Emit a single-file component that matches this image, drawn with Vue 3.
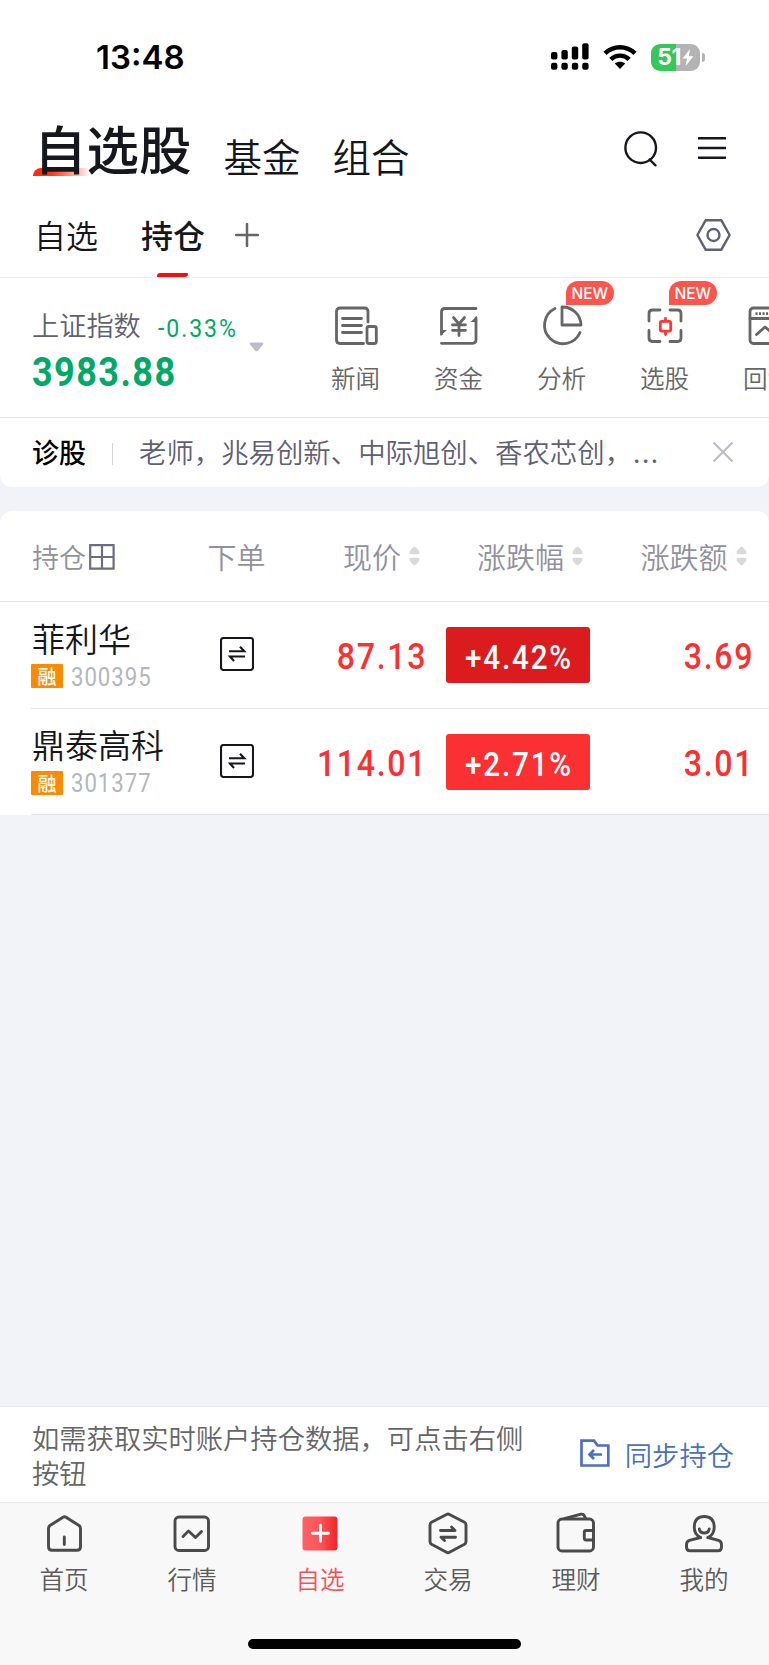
<template>
  <div class="page">
    <div class="status-bar">
      <span class="time">13:48</span>
      <div class="status-icons">
        <svg class="signal" width="38" height="28" viewBox="0 0 38 28">
          <rect x="0" y="9" width="6.4" height="7.5" rx="2" />
          <rect x="10.4" y="7" width="6.4" height="9.5" rx="2" />
          <rect x="20.8" y="3.5" width="6.4" height="13" rx="2" />
          <rect x="31.2" y="0.3" width="6.4" height="16.2" rx="2" />
          <rect
            v-for="n in 4"
            :key="n"
            :x="(n - 1) * 10.4"
            y="19.8"
            width="6.4"
            height="7"
            rx="2.2"
          />
        </svg>
        <svg class="wifi" width="34" height="26" viewBox="0 0 34 26">
          <g fill="none" stroke="#000" stroke-width="4.4">
            <path d="M2 9.4C10.5 1.2 23.5 1.2 32 9.4" />
            <path d="M7.8 15.4C13 10.4 21 10.4 26.2 15.4" />
          </g>
          <path d="M17 25L11.8 19.6C14.6 17 19.4 17 22.2 19.6Z" />
        </svg>
        <div class="battery">
          <span class="battery-num">51</span>
          <svg width="12" height="17" viewBox="0 0 12 17">
            <path d="M8 0L0.5 9.4H5L3.6 17L11.5 7.2H6.8Z" fill="#fff" />
          </svg>
        </div>
        <span class="battery-cap"></span>
      </div>
    </div>

    <header class="header">
      <div class="main-tab active"><span>自选股</span></div>
      <div class="main-tab">基金</div>
      <div class="main-tab">组合</div>
      <div class="header-icons">
        <svg width="34" height="38" viewBox="0 0 34 38" class="line-icon">
          <circle cx="16.7" cy="18.7" r="15.3" />
          <path d="M25.5 30.5L31.5 36.3" />
        </svg>
        <svg width="28" height="24" viewBox="0 0 28 24" class="line-icon">
          <path d="M0.5 2.3H27.5M0.5 12H27.5M0.5 21.7H27.5" />
        </svg>
      </div>
    </header>

    <nav class="sub-tabs">
      <span class="sub-tab">自选</span>
      <span class="sub-tab current">持仓</span>
      <svg class="add" width="24" height="24" viewBox="0 0 24 24">
        <path d="M1 12H23M12 1V23" />
      </svg>
      <svg class="setting" width="35" height="32" viewBox="0 0 35 32">
        <path d="M9.6 1.3H25.4L33.6 16L25.4 30.7H9.6L1.4 16Z" />
        <circle cx="17.5" cy="16" r="6" />
      </svg>
    </nav>

    <section class="index-row">
      <div class="index">
        <div class="index-top">
          <span class="index-name">上证指数</span>
          <span class="index-rate num">-0.33%</span>
        </div>
        <div class="index-value num">3983.88</div>
      </div>
      <svg class="arrow" width="15" height="10" viewBox="0 0 15 10">
        <path d="M2 0.5H13Q15 0.5 14 2.6L9 8.6Q7.5 10 6 8.6L1 2.6Q0 0.5 2 0.5Z" />
      </svg>
      <div class="entries">
        <div v-for="entry in entries" :key="entry.name" class="entry">
          <svg width="44" height="42" viewBox="0 0 44 42" class="entry-icon">
            <template v-if="entry.icon === 'news'">
              <path d="M34 17V6.5Q34 3 30.5 3H6Q2.5 3 2.5 6.5V35Q2.5 38.5 6 38.5H29.5" />
              <path d="M8.5 13.5H27.5M8.5 20.5H27.5M8.5 27.5H27.5" />
              <rect x="33" y="21.5" width="9.3" height="17" rx="2" />
            </template>
            <template v-else-if="entry.icon === 'money'">
              <path d="M39 3.5H8Q4.5 3.5 4.5 7V29" />
              <path d="M4.5 38.3H35.5Q39 38.3 39 34.8V13" />
              <path class="solid" d="M3.5 25H10L3.5 31ZM40 17H33.5L40 11Z" />
              <path d="M16.5 12.5L22 19L27.5 12.5M22 19V30.5M15.5 19.8H28.5M15.5 25.3H28.5" />
            </template>
            <template v-else-if="entry.icon === 'pie'">
              <path d="M15 3.5A18.5 18.5 0 1 0 40 27.5" />
              <path d="M22 2V20H41A18.5 18.5 0 0 0 22 2Z" />
            </template>
            <template v-else-if="entry.icon === 'pick'">
              <path d="M17 5H9.5Q6 5 6 8.5V16M27 5H34.5Q38 5 38 8.5V16M17 36.5H9.5Q6 36.5 6 33V25.5M27 36.5H34.5Q38 36.5 38 33V25.5" />
              <path class="red" d="M22.5 13.5V16M22.5 26.5V29.5" />
              <rect class="red" x="17.3" y="16.3" width="10.4" height="9.8" rx="1.5" />
            </template>
            <template v-else>
              <rect x="4" y="3" width="36" height="35.5" rx="3.5" />
              <path d="M4 13.5H40" />
              <path class="dots" d="M9.5 8.6H27" />
              <path d="M10.5 29.5L19 22L26 28L33 21" />
            </template>
          </svg>
          <span class="entry-name">{{ entry.name }}</span>
          <span v-if="entry.isNew" class="new">NEW</span>
        </div>
      </div>
    </section>

    <section class="notice">
      <span class="notice-title">诊股</span>
      <span class="notice-line"></span>
      <span class="notice-text">老师，兆易创新、中际旭创、香农芯创，<i>...</i></span>
      <svg class="close" width="22" height="22" viewBox="0 0 22 22">
        <path d="M1.5 1.5L20.5 20.5M20.5 1.5L1.5 20.5" />
      </svg>
    </section>

    <section class="table">
      <div class="row table-head">
        <div class="col-name head-name">
          <span>持仓</span>
          <svg width="26" height="26" viewBox="0 0 26 26">
            <path d="M1.2 1.2H24.6V24.6H1.2ZM13 1.2V24.6M1.2 13H24.6" />
          </svg>
        </div>
        <div class="col-order">下单</div>
        <div v-for="col in columns" :key="col.key" class="head-sort" :class="col.key">
          {{ col.label }}
          <svg width="11" height="20" viewBox="0 0 11 20">
            <path d="M5.5 0.5Q6.2 0.5 7 1.5L10.2 5Q11 8.3 9 8.3H2Q0 8.3 0.8 5L4 1.5Q4.8 0.5 5.5 0.5Z" />
            <path d="M5.5 19.5Q6.2 19.5 7 18.5L10.2 15Q11 11.7 9 11.7H2Q0 11.7 0.8 15L4 18.5Q4.8 19.5 5.5 19.5Z" />
          </svg>
        </div>
      </div>
      <div v-for="stock in stocks" :key="stock.code" class="row stock">
        <div class="col-name">
          <div class="stock-name">{{ stock.name }}</div>
          <div class="stock-sub">
            <span class="tag">融</span>
            <span class="code num">{{ stock.code }}</span>
          </div>
        </div>
        <div class="col-order">
          <svg width="34" height="34" viewBox="0 0 34 34" class="order-icon">
            <rect x="1" y="1" width="32" height="32" rx="2.5" />
            <path d="M9 14.3H24.3L20 9.8M25 19.5H10L14 24" />
          </svg>
        </div>
        <div class="price num">{{ stock.price }}</div>
        <div class="rate">
          <div class="rate-box" :class="{ deep: stock.deep }">
            <span class="num">{{ stock.rate }}</span>
          </div>
        </div>
        <div class="diff num">{{ stock.diff }}</div>
      </div>
    </section>

    <div class="blank"></div>

    <section class="sync">
      <p class="sync-text">如需获取实时账户持仓数据，可点击右侧按钮</p>
      <div class="sync-btn">
        <svg width="30" height="29" viewBox="0 0 30 29">
          <path d="M1.5 1.7H14L17.5 6.5H28.3V26.5H1.5Z" />
          <path d="M22 15.5H9.5M14 11L9.5 15.5L14 20" />
        </svg>
        <span>同步持仓</span>
      </div>
    </section>

    <footer class="tab-bar">
      <div
        v-for="tab in tabs"
        :key="tab.name"
        class="tab"
        :class="{ selected: tab.icon === 'self' }"
      >
        <svg width="42" height="44" viewBox="0 0 42 44" class="tab-icon">
          <template v-if="tab.icon === 'home'">
            <path d="M20 5.2Q21.5 4.2 23 5.2L36 13.5Q37.5 14.6 37.5 16.5V34.5Q37.5 38.3 34 38.3H9Q5.5 38.3 5.5 34.5V16.5Q5.5 14.6 7 13.5Z" />
            <path d="M21.3 25V32.5" />
          </template>
          <template v-else-if="tab.icon === 'market'">
            <rect x="4" y="5" width="33.5" height="33.5" rx="4" />
            <path d="M12 24.5L17.5 19L24.5 25.5L30.5 19.5" />
          </template>
          <template v-else-if="tab.icon === 'self'">
            <defs>
              <linearGradient id="selfFill">
                <stop offset="0" stop-color="#fd6265" />
                <stop offset="0.5" stop-color="#fb5558" />
                <stop offset="1" stop-color="#ef2426" />
              </linearGradient>
            </defs>
            <rect x="3.5" y="4.5" width="35" height="34" rx="3" fill="url(#selfFill)" stroke="none" />
            <path stroke="#fff" d="M13.5 21.3H29.5M21.5 13.3V29.3" />
          </template>
          <template v-else-if="tab.icon === 'trade'">
            <path d="M19.5 2.5Q21 1.6 22.5 2.5L37.5 10.3Q39 11.2 39 13V29.5Q39 31.3 37.5 32.2L22.5 40.3Q21 41.2 19.5 40.3L4.5 32.2Q3 31.3 3 29.5V13Q3 11.2 4.5 10.3Z" />
            <path d="M13.5 18.5H28L24.5 15M28.5 25.3H14L17.5 28.5" />
          </template>
          <template v-else-if="tab.icon === 'finance'">
            <rect x="3" y="7" width="35.5" height="32" rx="4" />
            <path d="M10 6.5L26 2.2Q29 1.5 30.5 6.5M38 18.5H31Q29.3 18.5 29.3 20.5V26Q29.3 28 31 28H38" />
          </template>
          <template v-else>
            <path d="M17.5 25.5Q11.3 22.5 11.3 15.5V14.5Q11.8 4.5 21.2 4.5Q30.7 4.5 31.2 14.5V15.5Q31.2 22.5 25 25.5" />
            <path d="M17.5 25.5L6.5 28.3Q3.5 29.3 3.5 32.5V35Q3.5 38.8 7 38.8H35Q38.5 38.8 38.5 35V32.5Q38.5 29.3 35.5 28.3L25 25.5" />
            <path d="M16.3 17Q17 21 21.2 21Q25.5 21 26.2 17" />
          </template>
        </svg>
        <span class="tab-name">{{ tab.name }}</span>
      </div>
      <div class="home-bar"></div>
    </footer>
  </div>
</template>

<script setup>
import { ref } from "vue";

const entries = ref([
  { name: "新闻", icon: "news" },
  { name: "资金", icon: "money" },
  { name: "分析", icon: "pie", isNew: true },
  { name: "选股", icon: "pick", isNew: true },
  { name: "回测", icon: "test" },
]);

const columns = [
  { key: "price", label: "现价" },
  { key: "rate", label: "涨跌幅" },
  { key: "diff", label: "涨跌额" },
];

const stocks = ref([
  { name: "菲利华", code: "300395", price: "87.13", rate: "+4.42%", diff: "3.69", deep: true },
  { name: "鼎泰高科", code: "301377", price: "114.01", rate: "+2.71%", diff: "3.01", deep: false },
]);

const tabs = [
  { name: "首页", icon: "home" },
  { name: "行情", icon: "market" },
  { name: "自选", icon: "self" },
  { name: "交易", icon: "trade" },
  { name: "理财", icon: "finance" },
  { name: "我的", icon: "mine" },
];
</script>

<style>
body {
  margin: 0;
  background: #f2f3f9;
}
</style>

<style scoped>
.page {
  width: 769px;
  height: 1665px;
  display: flex;
  flex-direction: column;
  overflow: hidden;
  background: #f2f3f9;
  color: #16171d;
  font-family: "Noto Sans CJK SC", sans-serif;
  font-weight: 350;
  white-space: nowrap;
}
.page > * {
  box-sizing: border-box;
  flex-shrink: 0;
}
svg {
  display: block;
  flex-shrink: 0;
}
/* 窄体数字 */
.num {
  display: inline-block;
  font-family: Roboto, sans-serif;
  transform: scaleX(0.87);
  transform-origin: left center;
}

/* 状态栏 */
.status-bar {
  height: 110px;
  padding: 4px 64px 0 96px;
  display: flex;
  align-items: center;
  justify-content: space-between;
  background: #fff;
}
.time {
  font: 600 33px/40px Inter, sans-serif;
  color: #000;
}
.status-icons {
  display: flex;
  align-items: center;
}
.wifi {
  margin-left: 14px;
}
.battery {
  width: 49px;
  height: 27px;
  margin-left: 14px;
  border-radius: 9px;
  background: linear-gradient(90deg, #34c759 51%, #b3b3b3 51%);
  display: flex;
  align-items: center;
  justify-content: center;
}
.battery-num {
  margin-right: 1px;
  font: 700 23px/27px Inter, sans-serif;
  letter-spacing: -0.5px;
  color: #fff;
}
.battery-cap {
  width: 3px;
  height: 9px;
  margin-left: 2px;
  border-radius: 0 3px 3px 0;
  background: #b3b3b3;
}

/* 顶部 */
.header {
  height: 80px;
  padding: 0 43px 0 34px;
  display: flex;
  background: #fff;
}
.main-tab {
  margin-right: 32px;
  font-size: 38.5px;
  line-height: 91px;
}
.main-tab.active {
  position: relative;
  margin-right: 32px;
  font-size: 52.5px;
  line-height: 74px;
  font-weight: 500;
}
.main-tab.active::before {
  content: "";
  position: absolute;
  left: -1px;
  top: 58px;
  width: 55px;
  height: 8px;
  border-radius: 8px 0 0 0;
  background: linear-gradient(90deg, #fb2a08, #fb3a18 35%, rgba(255, 90, 50, 0.1));
}
.main-tab.active span {
  position: relative;
}
.header-icons {
  flex: 1;
  display: flex;
  justify-content: flex-end;
  align-items: center;
  gap: 40px;
  height: 76px;
}
.line-icon {
  fill: none;
  stroke: #16171d;
  stroke-width: 2.4;
  stroke-linecap: round;
}

.sub-tabs {
  height: 88px;
  padding: 2px 38px 0 34px;
  display: flex;
  align-items: center;
  background: #fff;
  border-bottom: 1px solid #e9eaf2;
}
.sub-tab {
  position: relative;
  font-size: 32px;
  line-height: 85px;
}
.sub-tab.current {
  margin-left: 43px;
  font-weight: 500;
}
.sub-tab.current::after {
  content: "";
  position: absolute;
  left: 16px;
  bottom: 0;
  width: 31px;
  height: 4px;
  border-radius: 4px 1px 4px 0;
  background: #ff0a0a;
}
.add {
  margin-left: 30px;
  stroke: #666;
  stroke-width: 2.5;
  stroke-linecap: round;
}
.setting {
  margin-left: auto;
  fill: none;
  stroke: #5f6073;
  stroke-width: 2.4;
  stroke-linejoin: round;
}

/* 指数 */
.index-row {
  height: 140px;
  display: flex;
  background: #fff;
  border-bottom: 1px solid #e3e4ee;
}
.index {
  box-sizing: border-box;
  width: 249px;
  padding: 28px 0 0 32px;
}
.index-top {
  display: flex;
  height: 39px;
  line-height: 36px;
}
.index-name {
  color: #5f6073;
  font-size: 27.2px;
}
.index-rate {
  margin-left: 17px;
  padding-top: 4px;
  font-size: 26.5px;
  font-weight: 400;
  letter-spacing: 2.2px;
  color: #00a968;
}
.index-value {
  font-size: 41.5px;
  line-height: 54px;
  font-weight: 700;
  letter-spacing: 1.6px;
  color: #00a968;
}
.arrow {
  margin-top: 64px;
  fill: #bcbccb;
}
.entries {
  flex: 1;
  display: flex;
  margin-left: 40px;
  overflow: hidden;
}
.entry {
  position: relative;
  flex: 0 0 103px;
  display: flex;
  flex-direction: column;
  align-items: center;
}
.entry-icon {
  margin-top: 27px;
  fill: none;
  stroke: #666;
  stroke-width: 2.8;
  stroke-linecap: round;
  stroke-linejoin: round;
}
.entry-icon .red {
  stroke: #ff3434;
}
.entry-icon .solid {
  fill: #666;
  stroke: none;
}
.entry-icon .dots {
  stroke-linecap: butt;
  stroke-dasharray: 2.1 1.4;
}
.entry-name {
  margin-top: 13px;
  font-size: 24.6px;
  line-height: 34px;
  color: #666;
}
.new {
  position: absolute;
  left: 56px;
  top: 3px;
  width: 47.5px;
  height: 24px;
  border-radius: 12px 12px 12px 0;
  background: #ff544c;
  color: #fff;
  font: 500 15.5px/25px Inter, sans-serif;
  text-align: center;
}

/* 诊股 */
.notice {
  height: 69px;
  padding: 0 35px 3px 32px;
  display: flex;
  align-items: center;
  background: #fff;
  border-radius: 0 0 12px 12px;
}
.notice-title {
  font-size: 27px;
  font-weight: 500;
  color: #000;
}
.notice-line {
  width: 1px;
  height: 22px;
  margin: 5px 26px 0;
  background: #d4d4dc;
}
.notice-text {
  font-size: 27.4px;
  color: #5f6073;
}
.notice-text i {
  margin-left: 1px;
  font-style: normal;
  letter-spacing: 1.5px;
}
.close {
  margin: 2px 0 0 auto;
  stroke: #bcbccb;
  stroke-width: 2.2;
}

/* 持仓列表 */
.table {
  margin-top: 24px;
  background: #fff;
  border-radius: 12px 12px 0 0;
}
.row {
  display: grid;
  grid-template-columns: 171px 67px 159px 165px 1fr;
  align-items: center;
  padding-left: 32px;
  box-sizing: border-box;
}
.table-head {
  height: 91px;
  font-size: 29px;
  color: #91919e;
  border-bottom: 1px solid #e3e4ee;
}
.head-name {
  display: flex;
  align-items: center;
  gap: 3px;
  font-size: 27px;
}
.head-name svg {
  margin-top: 2px;
  fill: none;
  stroke: #6c6d80;
  stroke-width: 2.2;
}
.col-order {
  display: flex;
  justify-content: center;
}
.head-sort {
  display: flex;
  justify-content: flex-end;
  align-items: center;
  gap: 8px;
}
.head-sort svg {
  fill: #d9d9d9;
}
.head-sort.price {
  padding-right: 9px;
}
.head-sort.rate {
  padding-right: 11px;
}
.head-sort.diff {
  padding-right: 22.5px;
}
.stock {
  position: relative;
  height: 106.6px;
}
.stock::after {
  content: "";
  position: absolute;
  left: 31px;
  right: 0;
  bottom: 0;
  height: 1px;
  background: #e3e4ee;
}
.stock .col-name {
  padding-bottom: 2px;
}
.stock .col-order {
  padding-bottom: 2px;
}
.stock-name {
  font-size: 33px;
  line-height: 40px;
}
.stock-sub {
  display: flex;
  align-items: center;
  margin: 4px 0 0 -1px;
}
.tag {
  width: 32px;
  height: 24px;
  border-radius: 1px;
  background: #ff8a00;
  color: #fff;
  font-size: 19px;
  line-height: 23px;
  font-weight: 500;
  text-align: center;
}
.code {
  margin-left: 8px;
  padding-top: 2px;
  font-size: 25.5px;
  line-height: 27px;
  font-weight: 400;
  letter-spacing: 1.1px;
  color: #b5b6ba;
}
.order-icon {
  fill: none;
  stroke: #16171d;
  stroke-width: 2.1;
}
.stock .price,
.stock .diff {
  padding-top: 4px;
  font-size: 37px;
  line-height: 44px;
  font-weight: 500;
  letter-spacing: 1.9px;
  color: #fb3030;
  text-align: right;
  transform-origin: right center;
}
.stock .price {
  padding-right: 2px;
}
.stock .diff {
  padding-right: 17px;
}
.stock .rate {
  display: flex;
  justify-content: flex-end;
  padding-right: 4px;
}
.rate-box {
  width: 144px;
  height: 56px;
  border-radius: 3px;
  background: #fa3032;
  color: #fff;
  font-size: 34px;
  line-height: 56px;
  font-weight: 500;
  text-align: center;
}
.rate-box .num {
  margin-right: -2px;
  letter-spacing: 2.1px;
  transform-origin: center;
}
.rate-box.deep {
  background: #dc1b1e;
}

.page > .blank {
  flex: 1 1 0;
}

/* 同步持仓 */
.sync {
  height: 96px;
  padding: 0 35px 2px 32px;
  display: flex;
  justify-content: space-between;
  background: #fff;
  border-top: 1px solid #e6e7ef;
}
.sync-text {
  width: 495px;
  margin: 13px 0 0;
  font-size: 27.3px;
  line-height: 34.5px;
  color: #666;
  white-space: normal;
}
.sync-btn {
  display: flex;
  align-items: center;
  gap: 15px;
  font-size: 27.3px;
  color: #4a6fc3;
}
.sync-btn svg {
  fill: none;
  stroke: #4a6fc3;
  stroke-width: 2.7;
}

/* 底部导航 */
.tab-bar {
  position: relative;
  height: 163px;
  padding-right: 1px;
  display: flex;
  background: #f8f8f8;
  border-top: 1px solid #ececec;
}
.tab {
  flex: 1;
  display: flex;
  flex-direction: column;
  align-items: center;
}
.tab-icon {
  margin-top: 9px;
  fill: none;
  stroke: #4a4a4a;
  stroke-width: 2.9;
  stroke-linecap: round;
  stroke-linejoin: round;
}
.tab-name {
  margin-top: 5px;
  font-size: 24.6px;
  line-height: 34px;
  color: #5c5c5c;
}
.selected .tab-name {
  color: #fb5053;
}
.home-bar {
  position: absolute;
  left: 248px;
  bottom: 16px;
  width: 273px;
  height: 10px;
  border-radius: 5px;
  background: #000;
}
</style>
